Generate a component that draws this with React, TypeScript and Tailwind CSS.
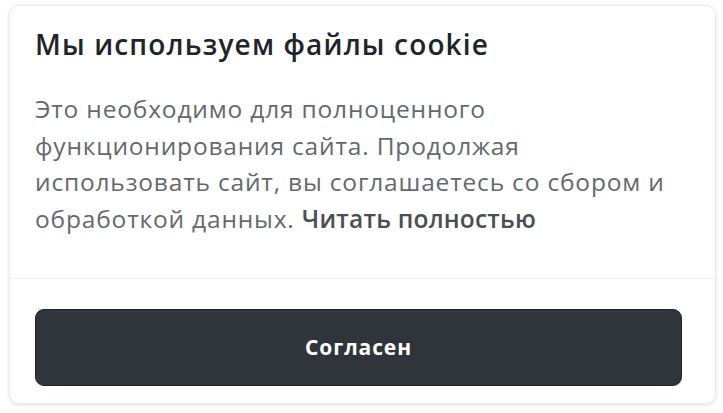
import React from 'react';

export default function App() {
  return (
    <div className="w-[723px] h-[413px] bg-white pt-[5px] pl-[9px] font-['Open_Sans','Noto_Sans',sans-serif]">
      {/* Cookie card */}
      <div className="w-[707px] h-[399px] flex flex-col rounded-[10px] bg-white border border-[#ececec] shadow-[0_1px_4px_rgba(0,0,0,0.12)]">
        <div className="px-[25px] pt-[22px] pb-[40px]">
          <h2 className="text-[28px] leading-[32px] font-semibold tracking-[1.15px] text-[#212529]">Мы используем файлы cookie</h2>
          <p className="mt-[31px] text-[24.5px] leading-[36.7px] tracking-[0.82px] text-[#64696f]">
            Это необходимо для полноценного
            <br />
            функционирования сайта. Продолжая
            <br />
            использовать сайт, вы соглашаетесь со сбором и
            <br />
            обработкой данных.{' '}
            <a href="#" className="font-semibold tracking-[0.2px] text-[#4a4f55]">Читать полностью</a>
          </p>
        </div>
        <div className="border-t border-[#eef0f3] pl-[25px] pr-[33px] pt-[30px]">
          <button className="w-full h-[77px] rounded-[9px] bg-[#30353c] border border-[#1f2328] text-white text-[21px] tracking-[0.9px] font-bold">
            Согласен
          </button>
        </div>
      </div>
    </div>
  );
}
